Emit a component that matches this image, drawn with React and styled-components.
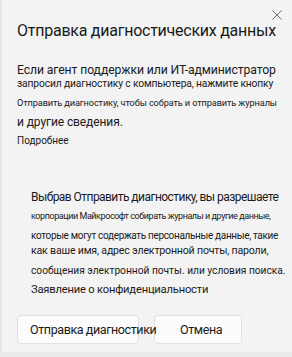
import React from "react";
import styled, { createGlobalStyle } from "styled-components";

const GlobalStyle = createGlobalStyle`
  html, body {
    margin: 0;
    padding: 0;
    background: #f3f3f3;
  }
  body {
    font-family: Roboto, "Liberation Sans", sans-serif;
    color: #1a1a1a;
  }
`;

const Dialog = styled.div`
  width: 292px;
  height: 357px;
  box-sizing: border-box;
  background: #f3f3f3;
  border-left: 2px solid #e7e7e7;
  border-bottom: 5px solid #ebebeb;
  position: relative;
  display: flex;
  flex-direction: column;
  padding-left: 15px;
  overflow: hidden;
`;

const CloseButton = styled.button`
  position: absolute;
  top: 9px;
  right: 10px;
  width: 11px;
  height: 11px;
  padding: 0;
  border: none;
  background: none;
  display: flex;
  align-items: center;
  justify-content: center;
  cursor: pointer;
`;

const Title = styled.h1`
  margin: 20px 0 0;
  font-size: 16px;
  font-weight: 400;
  line-height: 22px;
  letter-spacing: -0.25px;
  white-space: nowrap;
`;

const Block = styled.div`
  display: flex;
  flex-direction: column;
  padding-left: ${(p) => p.$indent || 0}px;
`;

const Line = styled.div`
  margin-top: ${(p) => p.$top || 0}px;
  font-size: ${(p) => p.$size}px;
  line-height: ${(p) => p.$lh}px;
  letter-spacing: ${(p) => p.$ls || 0}px;
  white-space: nowrap;
`;

const Actions = styled.div`
  display: flex;
  gap: 15px;
  margin-top: 16.5px;
`;

const Button = styled.button`
  height: 29px;
  width: ${(p) => p.$w}px;
  box-sizing: border-box;
  display: flex;
  align-items: flex-start;
  padding: 6px 0 0 ${(p) => p.$pad}px;
  background: #fcfcfc;
  border: 1px solid #e0e0e0;
  border-radius: 4px;
  font-family: inherit;
  font-size: 12.5px;
  line-height: 15px;
  letter-spacing: -0.4px;
  color: #1a1a1a;
  white-space: nowrap;
  overflow: visible;
  position: relative;
  z-index: ${(p) => (p.$front ? 1 : 0)};
`;

export default function App() {
  return (
    <>
      <GlobalStyle />
      <Dialog>
        <CloseButton aria-label="Закрыть">
          <svg width="10" height="10" viewBox="0 0 10 10">
            <path d="M0.5 0.5L9.5 9.5M9.5 0.5L0.5 9.5" stroke="#6e6e6e" strokeWidth="1" />
          </svg>
        </CloseButton>
        <Title>Отправка диагностических данных</Title>
        <Block>
          <Line $top={20} $size={12.2} $lh={16} $ls={-0.1}>
            Если агент поддержки или ИТ-администратор
          </Line>
          <Line $size={10.3} $lh={12} $ls={-0.15}>
            запросил диагностику с компьютера, нажмите кнопку
          </Line>
          <Line $top={6.5} $size={9.2} $lh={12} $ls={-0.11}>
            Отправить диагностику, чтобы собрать и отправить журналы
          </Line>
          <Line $top={5} $size={12} $lh={16} $ls={-0.1}>
            и другие сведения.
          </Line>
          <Line $top={4} $size={10} $lh={14}>
            Подробнее
          </Line>
        </Block>
        <Block $indent={14}>
          <Line $top={41.5} $size={12} $lh={16} $ls={-0.55}>
            Выбрав Отправить диагностику, вы разрешаете
          </Line>
          <Line $top={5.2} $size={9} $lh={12} $ls={-0.43}>
            корпорации Майкрософт собирать журналы и другие данные,
          </Line>
          <Line $top={6.7} $size={10} $lh={14} $ls={-0.33}>
            которые могут содержать персональные данные, такие
          </Line>
          <Line $top={1.5} $size={10.6} $lh={14} $ls={-0.19}>
            как ваше имя, адрес электронной почты, пароли,
          </Line>
          <Line $top={5.4} $size={10.2} $lh={14}>
            сообщения электронной почты. или условия поиска.
          </Line>
          <Line $top={4.7} $size={11.2} $lh={16} $ls={-0.2}>
            Заявление о конфиденциальности
          </Line>
        </Block>
        <Actions>
          <Button $w={122} $pad={12} $front>
            Отправка диагностики
          </Button>
          <Button $w={88} $pad={25}>
            Отмена
          </Button>
        </Actions>
      </Dialog>
    </>
  );
}
